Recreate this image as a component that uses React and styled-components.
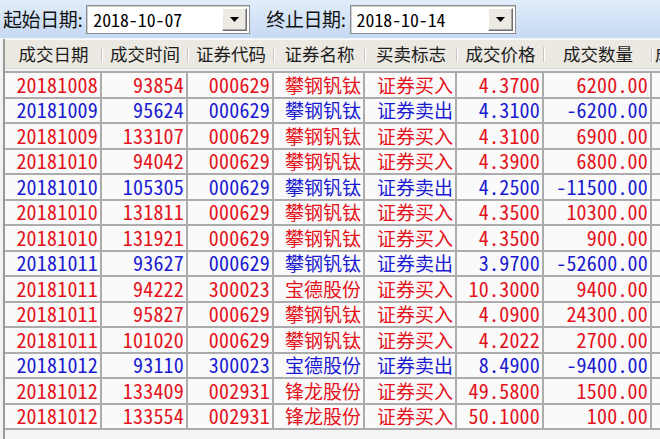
import React from "react";
import styled, { createGlobalStyle } from "styled-components";

const Global = createGlobalStyle`
  html, body { margin: 0; padding: 0; }
  body {
    background: #f2f2f2;
    width: 660px;
    height: 439px;
    overflow: hidden;
    font-family: "Noto Sans CJK SC", sans-serif;
  }
`;

const Page = styled.div`
  width: 660px;
  height: 439px;
  display: flex;
  flex-direction: column;
  overflow: hidden;
`;

const Toolbar = styled.div`
  height: 38px;
  display: flex;
  align-items: center;
  padding-left: 3px;
  background: linear-gradient(#e2edfa, #c6daf3);
  border-bottom: 1px solid #eef4fc;
  flex-shrink: 0;
`;

const Label = styled.span`
  font-family: "Noto Sans CJK SC", sans-serif;
  font-size: 19px;
  color: #111;
  letter-spacing: -0.4px;
  margin-left: ${(p) => p.$gap || 0}px;
  line-height: 24px;
`;

const Combo = styled.div`
  margin-left: 4px;
  width: ${(p) => p.$w}px;
  height: 29px;
  box-sizing: border-box;
  background: #fff;
  border: 1px solid #8d8d8d;
  box-shadow: inset 1px 1px 0 #cfcfcf;
  display: flex;
  align-items: center;
  justify-content: space-between;
  padding: 2px 2px 2px 6px;
`;

const ComboText = styled.span`
  font-family: "Noto Sans Mono CJK SC", "DejaVu Sans Mono", monospace;
  font-size: 17.8px;
  color: #000;
  line-height: 22px;
`;

const DropButton = styled.div`
  width: 25px;
  height: 23px;
  box-sizing: border-box;
  background: #ece9e2;
  border-top: 1px solid #fff;
  border-left: 1px solid #fff;
  border-right: 1px solid #6e6e6e;
  border-bottom: 1px solid #6e6e6e;
  box-shadow: inset -1px -1px 0 #a8a8a8;
  display: flex;
  align-items: center;
  justify-content: center;
`;

const Grid = styled.div`
  flex: 1;
  margin-left: 3px;
  border-left: 2px solid #9a9a9a;
  background: #f4f4f4;
  display: flex;
  flex-direction: column;
`;

const COLS = "97px 86px 86px 91px 92px 87px 108px 1fr";

const HeaderRow = styled.div`
  display: grid;
  grid-template-columns: ${COLS};
  height: 28px;
  background: #ebe9e2;
  border-top: 1px solid #fbfbfb;
  border-bottom: 1px solid #d8d8d8;
`;

const HeadCell = styled.div`
  position: relative;
  display: flex;
  align-items: center;
  justify-content: center;
  font-family: "Noto Sans CJK SC", sans-serif;
  font-size: 17.5px;
  color: #1c1c1c;
  white-space: nowrap;
  line-height: 22px;
  &::after {
    content: "";
    position: absolute;
    right: 0;
    top: 7px;
    height: 15px;
    width: 1px;
    background: #c4c4c4;
    box-shadow: 1px 0 0 #fff;
  }
`;

const HeadTail = styled(HeadCell)`
  justify-content: flex-start;
  padding-left: 3px;
  overflow: hidden;
  &::after { display: none; }
`;

const Body = styled.div`
  margin-top: 2px;
  border-top: 2px solid #aaaaaa;
  background: #fafafa;
`;

const Row = styled.div`
  display: grid;
  grid-template-columns: ${COLS};
  height: 25.5px;
  box-sizing: border-box;
  border-bottom: 2px solid #acacac;
  color: ${(p) => (p.$buy ? "#e5121b" : "#1a1ad2")};
`;

const Cell = styled.div`
  display: flex;
  align-items: center;
  justify-content: flex-end;
  padding-right: 2px;
  border-right: 2px solid #acacac;
  font-family: "Noto Sans Mono CJK SC", "DejaVu Sans Mono", "Noto Sans CJK SC", monospace;
  font-size: ${(p) => (p.$cjk ? 19 : 20)}px;
  letter-spacing: ${(p) => (p.$cjk ? 0 : 0.2)}px;
  line-height: 22px;
  white-space: nowrap;
`;

const Tail = styled.div``;

const Triangle = () => (
  <svg width="9" height="5" viewBox="0 0 9 5">
    <path d="M0 0 H9 L4.5 5 Z" fill="#000" />
  </svg>
);

const headers = ["成交日期", "成交时间", "证券代码", "证券名称", "买卖标志", "成交价格", "成交数量"];

const rows = [
  ["20181008", "93854", "000629", "攀钢钒钛", "证券买入", "4.3700", "6200.00"],
  ["20181009", "95624", "000629", "攀钢钒钛", "证券卖出", "4.3100", "-6200.00"],
  ["20181009", "133107", "000629", "攀钢钒钛", "证券买入", "4.3100", "6900.00"],
  ["20181010", "94042", "000629", "攀钢钒钛", "证券买入", "4.3900", "6800.00"],
  ["20181010", "105305", "000629", "攀钢钒钛", "证券卖出", "4.2500", "-11500.00"],
  ["20181010", "131811", "000629", "攀钢钒钛", "证券买入", "4.3500", "10300.00"],
  ["20181010", "131921", "000629", "攀钢钒钛", "证券买入", "4.3500", "900.00"],
  ["20181011", "93627", "000629", "攀钢钒钛", "证券卖出", "3.9700", "-52600.00"],
  ["20181011", "94222", "300023", "宝德股份", "证券买入", "10.3000", "9400.00"],
  ["20181011", "95827", "000629", "攀钢钒钛", "证券买入", "4.0900", "24300.00"],
  ["20181011", "101020", "000629", "攀钢钒钛", "证券买入", "4.2022", "2700.00"],
  ["20181012", "93110", "300023", "宝德股份", "证券卖出", "8.4900", "-9400.00"],
  ["20181012", "133409", "002931", "锋龙股份", "证券买入", "49.5800", "1500.00"],
  ["20181012", "133554", "002931", "锋龙股份", "证券买入", "50.1000", "100.00"],
];

export default function App() {
  return (
    <Page>
      <Global />
      <Toolbar>
        <Label>起始日期:</Label>
        <Combo $w={164}>
          <ComboText>2018-10-07</ComboText>
          <DropButton><Triangle /></DropButton>
        </Combo>
        <Label $gap={16}>终止日期:</Label>
        <Combo $w={166}>
          <ComboText>2018-10-14</ComboText>
          <DropButton><Triangle /></DropButton>
        </Combo>
      </Toolbar>
      <Grid>
        <HeaderRow>
          {headers.map((h) => (
            <HeadCell key={h}>{h}</HeadCell>
          ))}
          <HeadTail>成</HeadTail>
        </HeaderRow>
        <Body>
          {rows.map((r, i) => (
            <Row key={i} $buy={r[4] === "证券买入"}>
              {r.map((v, j) => (
                <Cell key={j} $cjk={j === 3 || j === 4}>{v}</Cell>
              ))}
              <Tail />
            </Row>
          ))}
        </Body>
      </Grid>
    </Page>
  );
}
